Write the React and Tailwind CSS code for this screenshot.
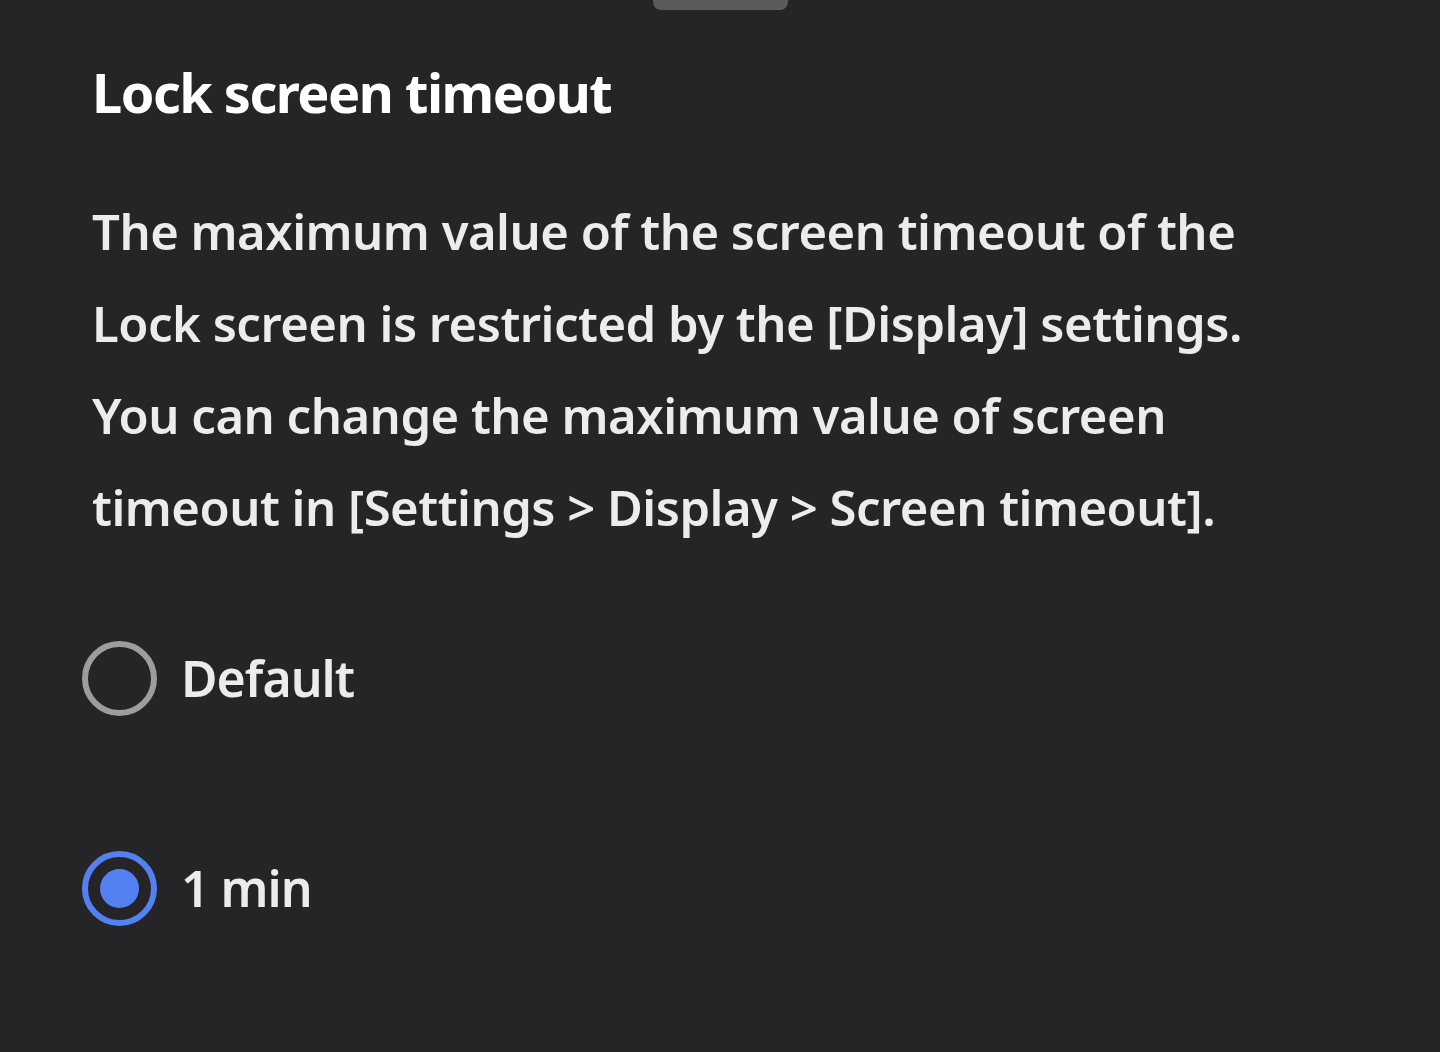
import React from 'react';

const options = [
    { label: 'Default', selected: false },
    { label: '1 min', selected: true },
];

function Radio({ selected }) {
    if (selected) {
        return (
            <div className="w-[75px] h-[75px] rounded-full border-[6px] border-[#5381f1] flex items-center justify-center shrink-0">
                <div className="w-[39px] h-[39px] rounded-full bg-[#5381f1]" />
            </div>
        );
    }
    return <div className="w-[75px] h-[75px] rounded-full border-[6px] border-[#9d9ca1] shrink-0" />;
}

export default function App() {
    return (
        <div className="w-[1440px] h-[1052px] bg-[#252527] overflow-hidden relative" style={{ fontFamily: '"Noto Sans", sans-serif' }}>
            {/* drag handle */}
            <div className="flex justify-center">
                <div className="w-[135px] h-[10px] rounded-b-[8px] bg-[#5b5b5d]" />
            </div>

            <div className="pl-[92px] pr-[40px]">
                <h1 className="mt-[42px] text-[54px] leading-[80px] font-bold text-white tracking-[-1.5px]">Lock screen timeout</h1>

                <p className="mt-[53px] text-[49px] leading-[92px] font-semibold text-[#ececec] tracking-[-0.5px] whitespace-nowrap">
                    The maximum value of the screen timeout of the<br />
                    Lock screen is restricted by the [Display] settings.<br />
                    You can change the maximum value of screen<br />
                    timeout in [Settings &gt; Display &gt; Screen timeout].
                </p>
            </div>

            <div className="mt-[88px] pl-[82px] flex flex-col gap-[135px]">
                {options.map((o) => (
                    <div key={o.label} className="flex items-center gap-[24px]">
                        <Radio selected={o.selected} />
                        <span className="text-[50px] font-semibold text-[#ececec] tracking-[-1px]">{o.label}</span>
                    </div>
                ))}
            </div>
        </div>
    );
}
